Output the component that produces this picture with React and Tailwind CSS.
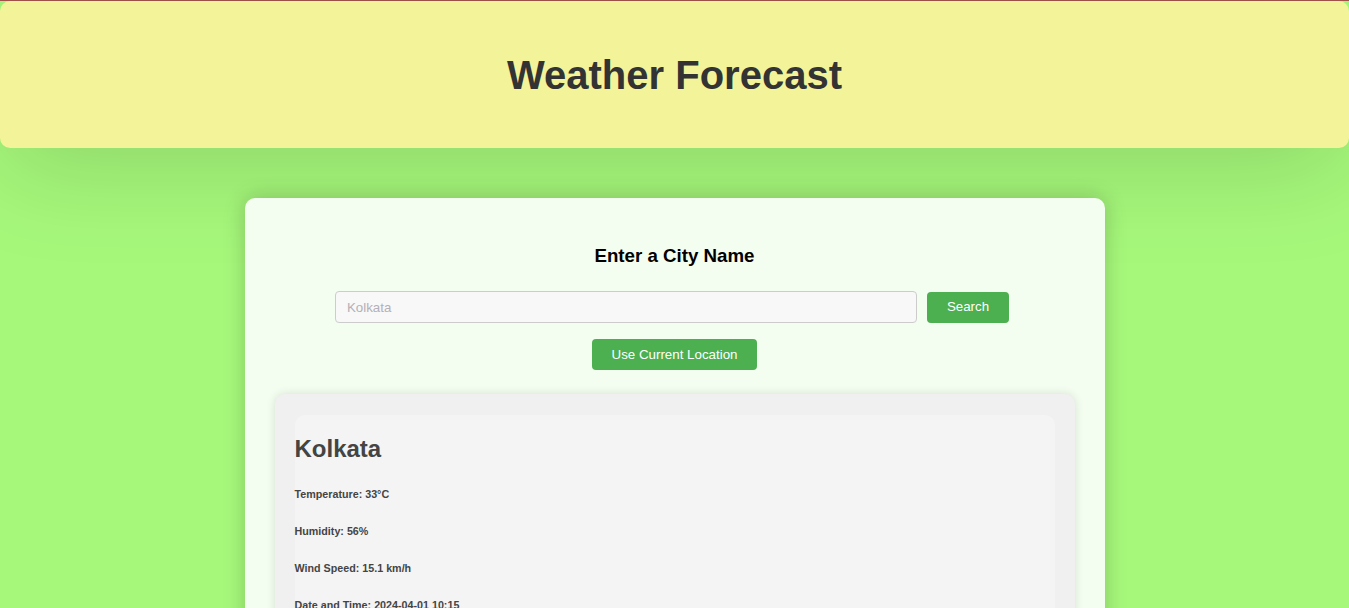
import React, { useState } from 'react';

const App = () => {
    const [city, setCity] = useState('');

    // static sample data for the card
    const weather = {
        name: 'Kolkata',
        temp: '33°C',
        humidity: '56%',
        wind: '15.1 km/h',
        time: '2024-04-01 10:15',
    };

    return (
        <div className="min-h-screen bg-[#a6f87b] font-['Liberation_Sans',Arial,sans-serif] overflow-hidden">
            <div className="h-px bg-[#a4524a]"></div>
            <header className="relative z-0 h-[147px] rounded-[10px] bg-[#f3f399] flex items-center justify-center shadow-[0_24px_100px_rgba(0,0,0,0.13)]">
                <h1 className="text-[40px] font-bold text-[#333] leading-none">Weather Forecast</h1>
            </header>

            <main className="flex justify-center pt-[50px]">
                <div className="relative z-10 w-[860px] rounded-[10px] bg-[#f3fdf0] px-[30px] pt-[47px] pb-[30px] shadow-[0_0_22px_rgba(0,0,0,0.2)]">
                    <h3 className="text-[18.72px] font-bold text-black leading-[22px] text-center">Enter a City Name</h3>

                    <div className="mt-[24px] flex items-center justify-center gap-[10px] pr-[5px]">
                        <input
                            type="text"
                            value={city}
                            onChange={(e) => setCity(e.target.value)}
                            placeholder="Kolkata"
                            className="w-[582px] h-[32px] rounded-[4px] border border-[#ccc] bg-[#f8f8f8] px-[11px] text-[13.33px] text-[#333] placeholder:text-[#b4b0b8] outline-none"
                        />
                        <button className="h-[31px] px-[20px] rounded-[4px] bg-[#4caf50] text-white text-[13.33px]">
                            Search
                        </button>
                    </div>

                    <div className="mt-[16px] flex justify-center">
                        <button className="h-[31px] px-[20px] rounded-[4px] bg-[#4caf50] text-white text-[13.33px]">
                            Use Current Location
                        </button>
                    </div>

                    <div className="mt-[24px] rounded-[10px] bg-[#f0f0f0] px-[20px] pt-[21px] pb-[20px] shadow-[0_0_10px_rgba(0,0,0,0.12)]">
                        <div className="rounded-[10px] bg-[#f4f4f4] pt-[20px] pb-[25px] text-[#444]">
                            <h2 className="text-[24px] font-bold leading-[28px]">{weather.name}</h2>
                            <h6 className="mt-[25px] text-[10.72px] font-bold leading-[12px]">Temperature: {weather.temp}</h6>
                            <h6 className="mt-[25px] text-[10.72px] font-bold leading-[12px]">Humidity: {weather.humidity}</h6>
                            <h6 className="mt-[25px] text-[10.72px] font-bold leading-[12px]">Wind Speed: {weather.wind}</h6>
                            <h6 className="mt-[25px] text-[10.72px] font-bold leading-[12px]">Date and Time: {weather.time}</h6>
                        </div>
                    </div>
                </div>
            </main>
        </div>
    );
};

export default App;
